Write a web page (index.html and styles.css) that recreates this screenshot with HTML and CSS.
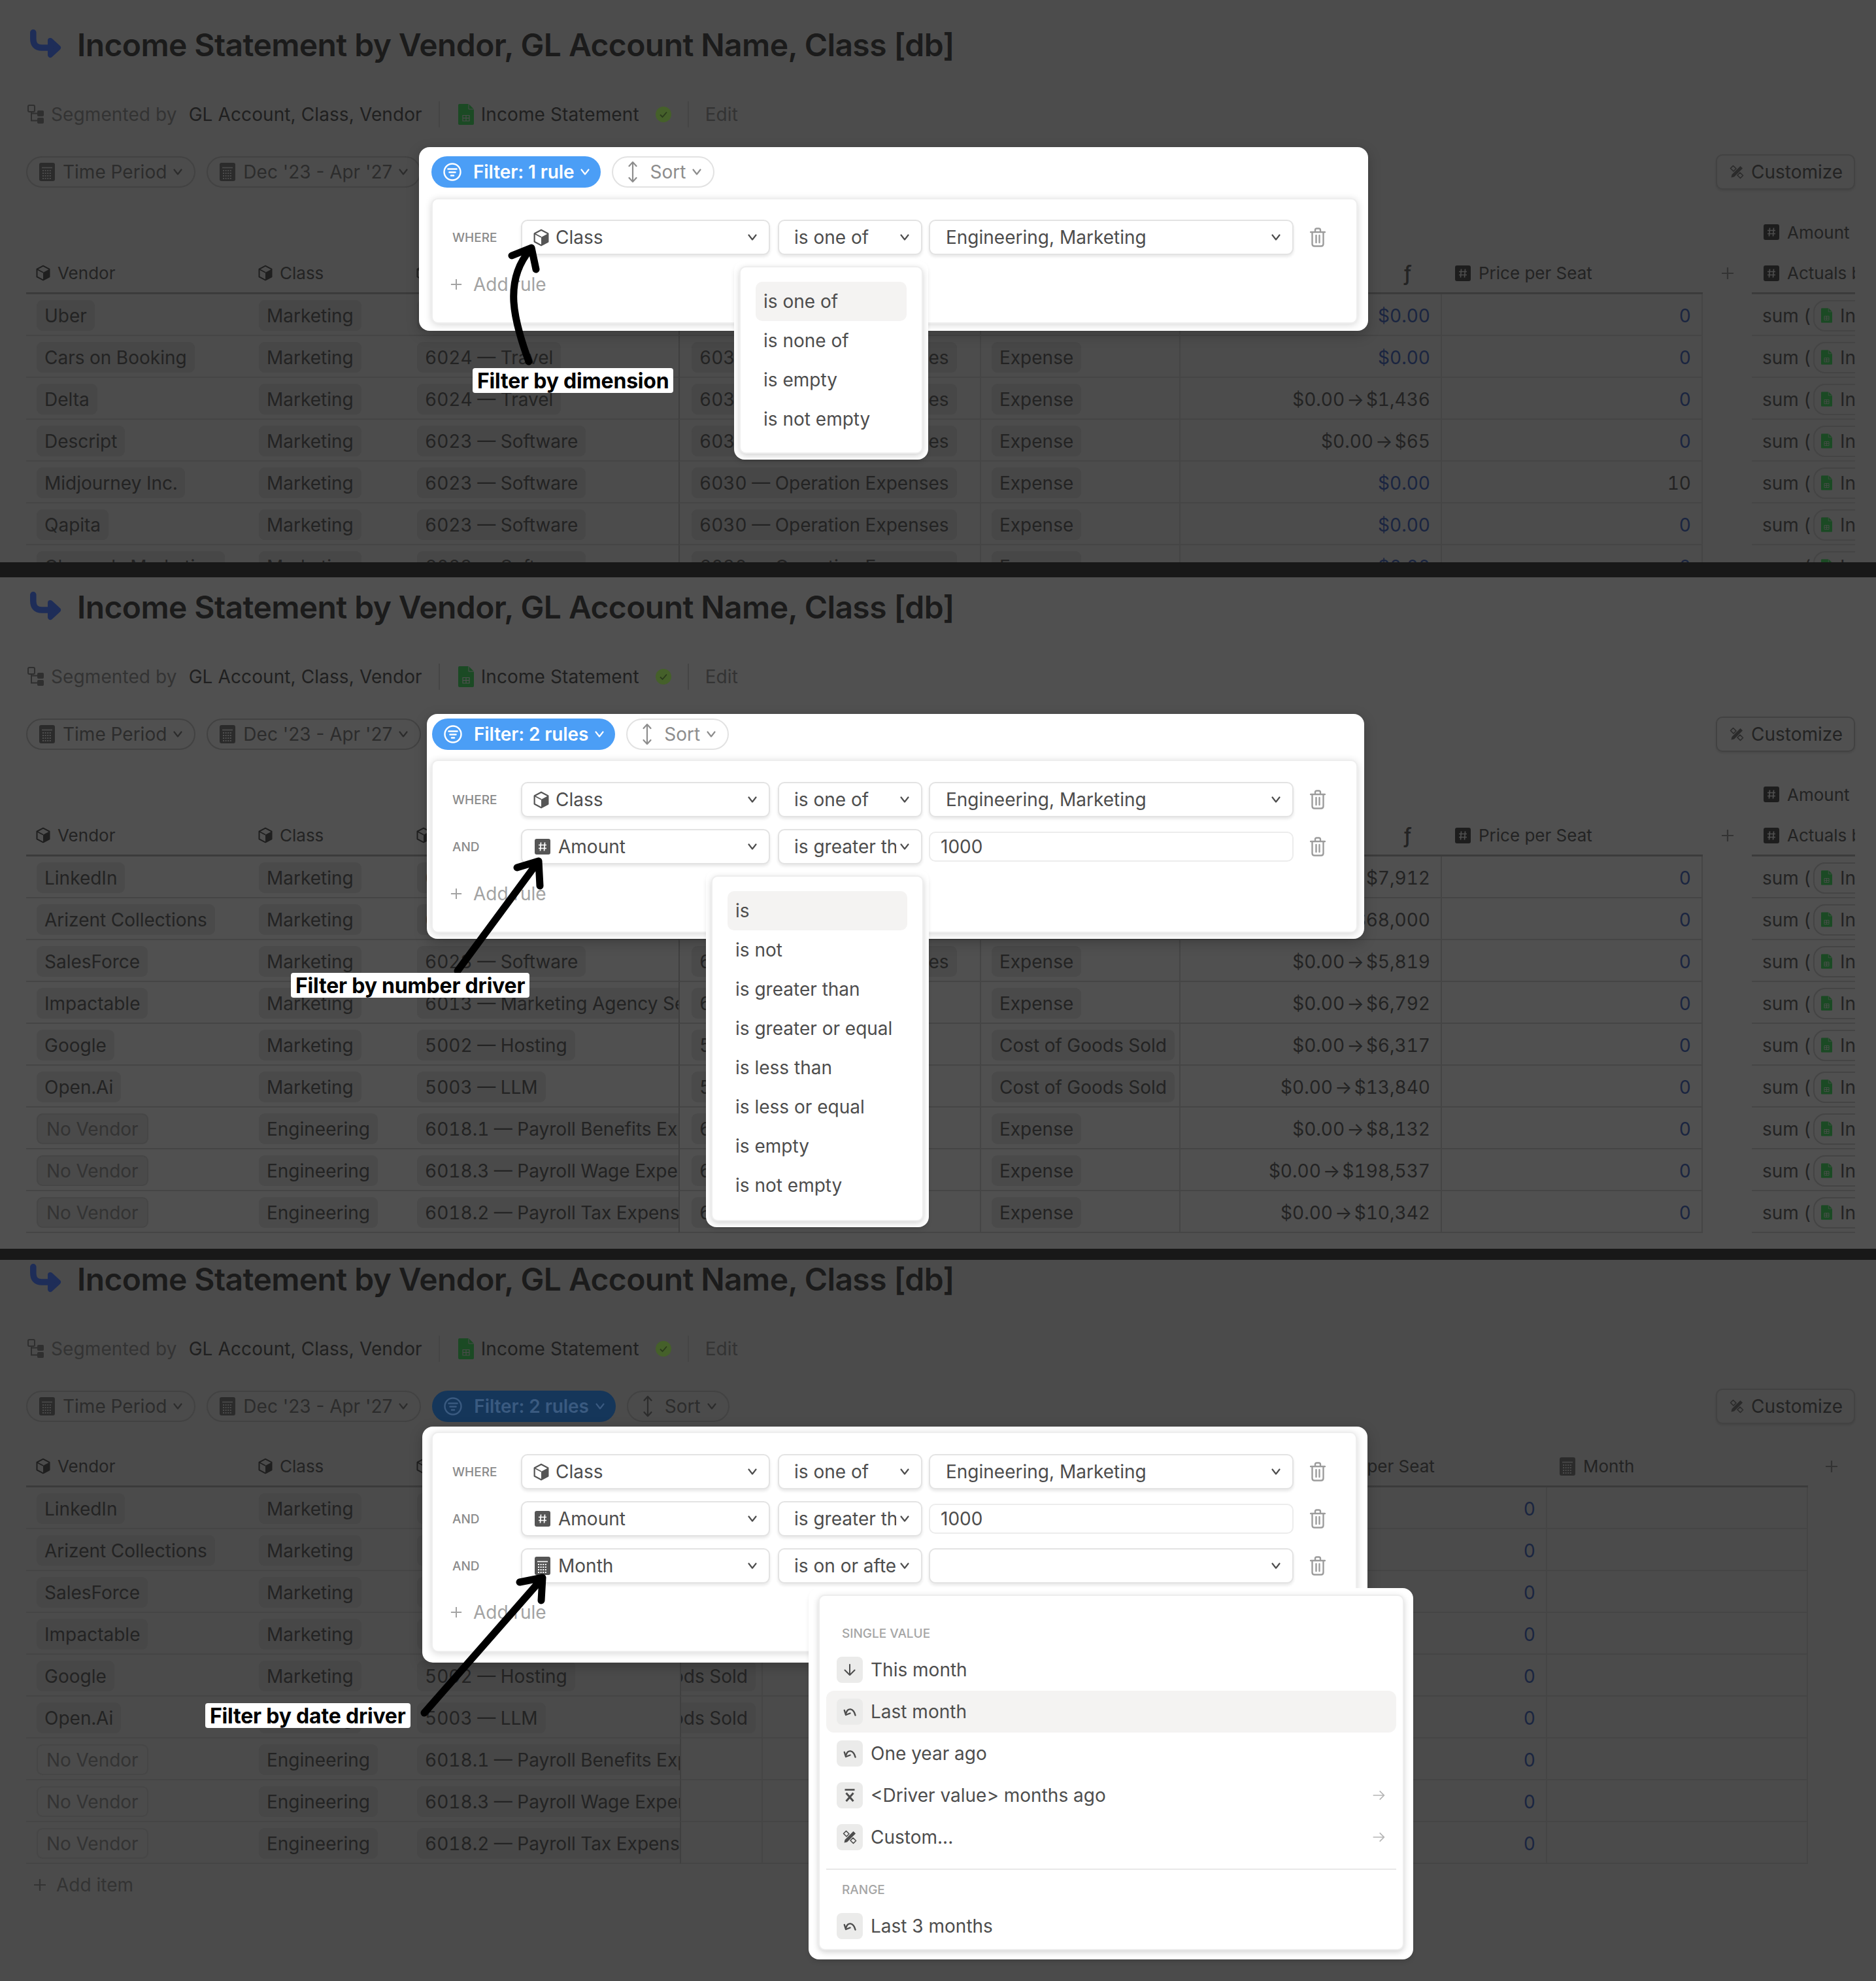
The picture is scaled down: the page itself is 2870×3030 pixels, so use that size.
FILE: index.html
```html
<!DOCTYPE html>
<html lang="en">
<head>
<meta charset="utf-8">
<title>Income Statement filters</title>
<link rel="stylesheet" href="styles.css">
</head>
<body>
<svg class="sprite" width="0" height="0" aria-hidden="true">
<defs>
<mask id="m-hash"><rect width="24" height="24" fill="#fff"/><path d="M9.500 5.500 8.500 18.500M15.500 5.500 14.500 18.500M6 9.500H18M6 14.500H18" stroke="#000" stroke-width="1.700" fill="none"/></mask>
<mask id="m-calc"><rect width="24" height="28" fill="#fff"/><path d="M4 7.500H20" stroke="#000" stroke-width="1.600"/><path d="M5 12H19M5 16H19M5 20H19M5 24H19" stroke="#000" stroke-width="1.800" stroke-dasharray="2 1.600"/></mask>
<mask id="m-sheet"><rect width="24" height="32" fill="#fff"/><path d="M16 0V8H24" fill="none" stroke="#000" stroke-width="1"/><path d="M7 17.500H17V26H7ZM7 21.700H17M12 17.500V26" fill="none" stroke="#000" stroke-width="1.200"/></mask>
<symbol id="i-title" viewBox="0 0 50 48"><path d="M4.800 5.800V15Q4.800 29 18 29H32" fill="none" stroke="currentColor" stroke-width="9.500" stroke-linecap="round"/><path d="M31 18 43 29 31 40Z" fill="currentColor" stroke="currentColor" stroke-width="8" stroke-linejoin="round"/></symbol>
<symbol id="i-cube" viewBox="0 0 22 24"><path d="M11 1.200 20.500 6.200V17.800L11 22.800 1.500 17.800V6.200Z" fill="none" stroke="currentColor" stroke-width="2" stroke-linejoin="round"/><path d="M11 11.300 20.500 6.200V17.800L11 22.800Z" fill="currentColor"/><path d="M1.500 6.200 11 11.300" stroke="currentColor" stroke-width="1.600"/></symbol>
<symbol id="i-hash" viewBox="0 0 24 24"><rect width="24" height="24" rx="3" fill="currentColor" mask="url(#m-hash)"/></symbol>
<symbol id="i-calc" viewBox="0 0 24 28"><rect width="24" height="28" rx="3" fill="currentColor" mask="url(#m-calc)"/></symbol>
<symbol id="i-sheet" viewBox="0 0 24 32"><path d="M2 0H16L24 8V30Q24 32 22 32H2Q0 32 0 30V2Q0 0 2 0Z" fill="currentColor" mask="url(#m-sheet)"/></symbol>
<symbol id="i-check" viewBox="0 0 24 24"><circle cx="12" cy="12" r="12" fill="currentColor"/><path d="M7 12.500 10.500 16 17 8.500" fill="none" stroke="#2a3a1c" stroke-width="1.800"/></symbol>
<symbol id="i-filter" viewBox="0 0 28 28"><circle cx="14" cy="14" r="12.500" fill="none" stroke="currentColor" stroke-width="2.400"/><path d="M7.500 9.500H20.500M9.500 14.500H18.500M12 19.500H16" stroke="currentColor" stroke-width="2.600" stroke-linecap="round"/></symbol>
<symbol id="i-sort" viewBox="0 0 16 34"><path d="M8 2V32M2.500 8 8 2 13.500 8M2.500 26 8 32 13.500 26" fill="none" stroke="currentColor" stroke-width="2.200" stroke-linecap="round" stroke-linejoin="round"/></symbol>
<symbol id="i-chev" viewBox="0 0 14 10"><path d="M1.500 1.500 7 8.500 12.500 1.500" fill="none" stroke="currentColor" stroke-width="2.200" stroke-linecap="round" stroke-linejoin="round"/></symbol>
<symbol id="i-trash" viewBox="0 0 24 30"><path d="M1 7H23M8 7V4Q8 1.500 10.500 1.500H13.500Q16 1.500 16 4V7M3.500 7V25Q3.500 28.500 7 28.500H17Q20.500 28.500 20.500 25V7M9.500 12V23M14.500 12V23" fill="none" stroke="currentColor" stroke-width="2.400" stroke-linecap="round"/></symbol>
<symbol id="i-tree" viewBox="0 0 26 30"><rect x="1" y="1" width="10" height="10" rx="2" fill="none" stroke="currentColor" stroke-width="2"/><rect x="15" y="9" width="10" height="9" rx="2" fill="currentColor"/><rect x="15" y="20" width="10" height="9" rx="2" fill="currentColor"/><path d="M6 11V24.500H15M6 13.500H15" fill="none" stroke="currentColor" stroke-width="2"/></symbol>
<symbol id="i-custom" viewBox="0 0 24 24"><path d="M2.500 6.500 6.500 2.500 11 7 7 11ZM13 17 17 13 21.500 17.500 17.500 21.500Z" fill="none" stroke="currentColor" stroke-width="1.600" stroke-linejoin="round"/><path d="M17.500 3 21 6.500 8 19.500 3.500 20.500 4.500 16Z" fill="currentColor"/></symbol>
<symbol id="i-plus" viewBox="0 0 20 20"><path d="M10 1V19M1 10H19" stroke="currentColor" stroke-width="2.200"/></symbol>
<symbol id="i-undo" viewBox="0 0 20 14"><path d="M4.500 9C7 1 15.500 1 18.500 12.500" fill="none" stroke="currentColor" stroke-width="2.400" stroke-linecap="round"/><path d="M1.800 5 4 12 10.500 9.500" fill="none" stroke="currentColor" stroke-width="2.400" stroke-linecap="round" stroke-linejoin="round"/></symbol>
<symbol id="i-down" viewBox="0 0 18 18"><path d="M9 1V17M1.500 9.500 9 17 16.500 9.500" fill="none" stroke="currentColor" stroke-width="2" stroke-linecap="round" stroke-linejoin="round"/></symbol>
<symbol id="i-xbar" viewBox="0 0 16 20"><path d="M0.500 1.500H15.500" stroke="currentColor" stroke-width="2.600"/><path d="M2.500 6.500 13.500 19M13.500 6.500 2.500 19" stroke="currentColor" stroke-width="3"/></symbol>
<symbol id="i-right" viewBox="0 0 24 20"><path d="M2 10H22M14 2 22 10 14 18" fill="none" stroke="currentColor" stroke-width="2"/></symbol>
</defs>
</svg>

<section class="view view-one">
  <h1 class="title"><svg class="title-icon"><use href="#i-title"/></svg>Income Statement by Vendor, GL Account Name, Class [db]</h1>
  <div class="meta">
    <svg class="meta-tree"><use href="#i-tree"/></svg><span class="meta-muted">Segmented by</span><span class="meta-seg">GL Account, Class, Vendor</span>
    <span class="meta-div"></span><svg class="meta-sheet"><use href="#i-sheet"/></svg><span class="meta-name">Income Statement</span><svg class="meta-check"><use href="#i-check"/></svg>
    <span class="meta-div"></span><span class="meta-edit">Edit</span>
  </div>
  <div class="controls">
    <span class="pill"><svg class="ic-calc"><use href="#i-calc"/></svg>Time Period<svg class="chev"><use href="#i-chev"/></svg></span>
    <span class="pill"><svg class="ic-calc"><use href="#i-calc"/></svg>Dec '23 - Apr '27<svg class="chev"><use href="#i-chev"/></svg></span>
    <span class="customize"><svg class="ic-custom"><use href="#i-custom"/></svg>Customize</span>
  </div>
  <div class="groupbar"><span class="headcell head-side"><svg class="ic-hash"><use href="#i-hash"/></svg>Amount</span></div>
  <div class="table">
    <div class="row thead">
      <div class="cell"><svg class="ic-cube"><use href="#i-cube"/></svg>Vendor</div><div class="cell"><svg class="ic-cube"><use href="#i-cube"/></svg>Class</div><div class="cell"><svg class="ic-cube"><use href="#i-cube"/></svg>GL Account Name</div><div class="cell"></div><div class="cell"></div><div class="cell cell-fn">ƒ</div><div class="cell"><svg class="ic-hash"><use href="#i-hash"/></svg>Price per Seat</div><div class="cell-add"><svg class="ic-plus"><use href="#i-plus"/></svg></div><div class="cell"><svg class="ic-hash"><use href="#i-hash"/></svg>Actuals by Month</div>
    </div>
    <div class="row"><div class="cell"><span class="chip">Uber</span></div><div class="cell"><span class="chip">Marketing</span></div><div class="cell"><span class="chip">6024 — Travel</span></div><div class="cell"><span class="chip">6030 — Operation Expenses</span></div><div class="cell"><span class="chip">Expense</span></div><div class="cell num blue">$0.00</div><div class="cell num blue">0</div><div class="cell-add"></div><div class="cell sum">sum (<span class="ref"><svg class="ic-sheet"><use href="#i-sheet"/></svg>Income</span></div></div>
    <div class="row"><div class="cell"><span class="chip">Cars on Booking</span></div><div class="cell"><span class="chip">Marketing</span></div><div class="cell"><span class="chip">6024 — Travel</span></div><div class="cell"><span class="chip">6030 — Operation Expenses</span></div><div class="cell"><span class="chip">Expense</span></div><div class="cell num blue">$0.00</div><div class="cell num blue">0</div><div class="cell-add"></div><div class="cell sum">sum (<span class="ref"><svg class="ic-sheet"><use href="#i-sheet"/></svg>Income</span></div></div>
    <div class="row"><div class="cell"><span class="chip">Delta</span></div><div class="cell"><span class="chip">Marketing</span></div><div class="cell"><span class="chip">6024 — Travel</span></div><div class="cell"><span class="chip">6030 — Operation Expenses</span></div><div class="cell"><span class="chip">Expense</span></div><div class="cell num">$0.00<span class="to">→</span>$1,436</div><div class="cell num blue">0</div><div class="cell-add"></div><div class="cell sum">sum (<span class="ref"><svg class="ic-sheet"><use href="#i-sheet"/></svg>Income</span></div></div>
    <div class="row"><div class="cell"><span class="chip">Descript</span></div><div class="cell"><span class="chip">Marketing</span></div><div class="cell"><span class="chip">6023 — Software</span></div><div class="cell"><span class="chip">6030 — Operation Expenses</span></div><div class="cell"><span class="chip">Expense</span></div><div class="cell num">$0.00<span class="to">→</span>$65</div><div class="cell num blue">0</div><div class="cell-add"></div><div class="cell sum">sum (<span class="ref"><svg class="ic-sheet"><use href="#i-sheet"/></svg>Income</span></div></div>
    <div class="row"><div class="cell"><span class="chip">Midjourney Inc.</span></div><div class="cell"><span class="chip">Marketing</span></div><div class="cell"><span class="chip">6023 — Software</span></div><div class="cell"><span class="chip">6030 — Operation Expenses</span></div><div class="cell"><span class="chip">Expense</span></div><div class="cell num blue">$0.00</div><div class="cell num">10</div><div class="cell-add"></div><div class="cell sum">sum (<span class="ref"><svg class="ic-sheet"><use href="#i-sheet"/></svg>Income</span></div></div>
    <div class="row"><div class="cell"><span class="chip">Qapita</span></div><div class="cell"><span class="chip">Marketing</span></div><div class="cell"><span class="chip">6023 — Software</span></div><div class="cell"><span class="chip">6030 — Operation Expenses</span></div><div class="cell"><span class="chip">Expense</span></div><div class="cell num blue">$0.00</div><div class="cell num blue">0</div><div class="cell-add"></div><div class="cell sum">sum (<span class="ref"><svg class="ic-sheet"><use href="#i-sheet"/></svg>Income</span></div></div>
    <div class="row"><div class="cell"><span class="chip">Channels Marketing</span></div><div class="cell"><span class="chip">Marketing</span></div><div class="cell"><span class="chip">6023 — Software</span></div><div class="cell"><span class="chip">6030 — Operation Expenses</span></div><div class="cell"><span class="chip">Expense</span></div><div class="cell num blue">$0.00</div><div class="cell num blue">0</div><div class="cell-add"></div><div class="cell sum">sum (<span class="ref"><svg class="ic-sheet"><use href="#i-sheet"/></svg>Income</span></div></div>
  </div>

  <div class="popup popup-one">
    <div class="popup-pills">
      <span class="pill-filter"><svg class="ic-filter"><use href="#i-filter"/></svg>Filter: 1 rule<svg class="chev"><use href="#i-chev"/></svg></span>
      <span class="pill-sort"><svg class="ic-sort"><use href="#i-sort"/></svg>Sort<svg class="chev"><use href="#i-chev"/></svg></span>
    </div>
    <div class="rules">
      <div class="rule"><span class="rule-label">WHERE</span><span class="sel sel-field"><svg class="ic-cube"><use href="#i-cube"/></svg><span class="sel-text">Class</span><svg class="chev"><use href="#i-chev"/></svg></span><span class="sel sel-op"><span class="sel-text">is one of</span><svg class="chev"><use href="#i-chev"/></svg></span><span class="sel sel-val"><span class="sel-text">Engineering, Marketing</span><svg class="chev"><use href="#i-chev"/></svg></span><svg class="ic-trash"><use href="#i-trash"/></svg></div>
      <div class="add-rule"><svg class="ic-plus"><use href="#i-plus"/></svg>Add rule</div>
    </div>
  </div>
  <div class="menu menu-one"><ul class="menu-card"><li class="menu-item is-active">is one of</li><li class="menu-item">is none of</li><li class="menu-item">is empty</li><li class="menu-item">is not empty</li></ul></div>
  <svg class="arrow"><path d="M809 553C786 490 770 430 811 382M783 391 813 379 820 412"/></svg>
  <span class="callout callout-one">Filter by dimension</span>
</section>

<div class="gap gap-one"></div>

<section class="view view-two">
  <h1 class="title"><svg class="title-icon"><use href="#i-title"/></svg>Income Statement by Vendor, GL Account Name, Class [db]</h1>
  <div class="meta">
    <svg class="meta-tree"><use href="#i-tree"/></svg><span class="meta-muted">Segmented by</span><span class="meta-seg">GL Account, Class, Vendor</span>
    <span class="meta-div"></span><svg class="meta-sheet"><use href="#i-sheet"/></svg><span class="meta-name">Income Statement</span><svg class="meta-check"><use href="#i-check"/></svg>
    <span class="meta-div"></span><span class="meta-edit">Edit</span>
  </div>
  <div class="controls">
    <span class="pill"><svg class="ic-calc"><use href="#i-calc"/></svg>Time Period<svg class="chev"><use href="#i-chev"/></svg></span>
    <span class="pill"><svg class="ic-calc"><use href="#i-calc"/></svg>Dec '23 - Apr '27<svg class="chev"><use href="#i-chev"/></svg></span>
    <span class="customize"><svg class="ic-custom"><use href="#i-custom"/></svg>Customize</span>
  </div>
  <div class="groupbar"><span class="headcell head-side"><svg class="ic-hash"><use href="#i-hash"/></svg>Amount</span></div>
  <div class="table">
    <div class="row thead">
      <div class="cell"><svg class="ic-cube"><use href="#i-cube"/></svg>Vendor</div><div class="cell"><svg class="ic-cube"><use href="#i-cube"/></svg>Class</div><div class="cell"><svg class="ic-cube"><use href="#i-cube"/></svg>GL Account Name</div><div class="cell"></div><div class="cell"></div><div class="cell cell-fn">ƒ</div><div class="cell"><svg class="ic-hash"><use href="#i-hash"/></svg>Price per Seat</div><div class="cell-add"><svg class="ic-plus"><use href="#i-plus"/></svg></div><div class="cell"><svg class="ic-hash"><use href="#i-hash"/></svg>Actuals by Month</div>
    </div>
    <div class="row"><div class="cell"><span class="chip">LinkedIn</span></div><div class="cell"><span class="chip">Marketing</span></div><div class="cell"><span class="chip">6013 — Marketing Agency Services</span></div><div class="cell"><span class="chip">6010 — Marketing</span></div><div class="cell"><span class="chip">Expense</span></div><div class="cell num">$0.00<span class="to">→</span>$7,912</div><div class="cell num blue">0</div><div class="cell-add"></div><div class="cell sum">sum (<span class="ref"><svg class="ic-sheet"><use href="#i-sheet"/></svg>Income</span></div></div>
    <div class="row"><div class="cell"><span class="chip">Arizent Collections</span></div><div class="cell"><span class="chip">Marketing</span></div><div class="cell"><span class="chip">6013 — Marketing Agency Services</span></div><div class="cell"><span class="chip">6010 — Marketing</span></div><div class="cell"><span class="chip">Expense</span></div><div class="cell num">$0.00<span class="to">→</span>$68,000</div><div class="cell num blue">0</div><div class="cell-add"></div><div class="cell sum">sum (<span class="ref"><svg class="ic-sheet"><use href="#i-sheet"/></svg>Income</span></div></div>
    <div class="row"><div class="cell"><span class="chip">SalesForce</span></div><div class="cell"><span class="chip">Marketing</span></div><div class="cell"><span class="chip">6023 — Software</span></div><div class="cell"><span class="chip">6030 — Operation Expenses</span></div><div class="cell"><span class="chip">Expense</span></div><div class="cell num">$0.00<span class="to">→</span>$5,819</div><div class="cell num blue">0</div><div class="cell-add"></div><div class="cell sum">sum (<span class="ref"><svg class="ic-sheet"><use href="#i-sheet"/></svg>Income</span></div></div>
    <div class="row"><div class="cell"><span class="chip">Impactable</span></div><div class="cell"><span class="chip">Marketing</span></div><div class="cell"><span class="chip">6013 — Marketing Agency Services</span></div><div class="cell"><span class="chip">6010 — Marketing</span></div><div class="cell"><span class="chip">Expense</span></div><div class="cell num">$0.00<span class="to">→</span>$6,792</div><div class="cell num blue">0</div><div class="cell-add"></div><div class="cell sum">sum (<span class="ref"><svg class="ic-sheet"><use href="#i-sheet"/></svg>Income</span></div></div>
    <div class="row"><div class="cell"><span class="chip">Google</span></div><div class="cell"><span class="chip">Marketing</span></div><div class="cell"><span class="chip">5002 — Hosting</span></div><div class="cell"><span class="chip">5000 — COGS</span></div><div class="cell"><span class="chip">Cost of Goods Sold</span></div><div class="cell num">$0.00<span class="to">→</span>$6,317</div><div class="cell num blue">0</div><div class="cell-add"></div><div class="cell sum">sum (<span class="ref"><svg class="ic-sheet"><use href="#i-sheet"/></svg>Income</span></div></div>
    <div class="row"><div class="cell"><span class="chip">Open.Ai</span></div><div class="cell"><span class="chip">Marketing</span></div><div class="cell"><span class="chip">5003 — LLM</span></div><div class="cell"><span class="chip">5000 — COGS</span></div><div class="cell"><span class="chip">Cost of Goods Sold</span></div><div class="cell num">$0.00<span class="to">→</span>$13,840</div><div class="cell num blue">0</div><div class="cell-add"></div><div class="cell sum">sum (<span class="ref"><svg class="ic-sheet"><use href="#i-sheet"/></svg>Income</span></div></div>
    <div class="row"><div class="cell"><span class="chip chip-empty">No Vendor</span></div><div class="cell"><span class="chip">Engineering</span></div><div class="cell"><span class="chip">6018.1 — Payroll Benefits Expense</span></div><div class="cell"><span class="chip">6018 — Payroll</span></div><div class="cell"><span class="chip">Expense</span></div><div class="cell num">$0.00<span class="to">→</span>$8,132</div><div class="cell num blue">0</div><div class="cell-add"></div><div class="cell sum">sum (<span class="ref"><svg class="ic-sheet"><use href="#i-sheet"/></svg>Income</span></div></div>
    <div class="row"><div class="cell"><span class="chip chip-empty">No Vendor</span></div><div class="cell"><span class="chip">Engineering</span></div><div class="cell"><span class="chip">6018.3 — Payroll Wage Expense</span></div><div class="cell"><span class="chip">6018 — Payroll</span></div><div class="cell"><span class="chip">Expense</span></div><div class="cell num">$0.00<span class="to">→</span>$198,537</div><div class="cell num blue">0</div><div class="cell-add"></div><div class="cell sum">sum (<span class="ref"><svg class="ic-sheet"><use href="#i-sheet"/></svg>Income</span></div></div>
    <div class="row"><div class="cell"><span class="chip chip-empty">No Vendor</span></div><div class="cell"><span class="chip">Engineering</span></div><div class="cell"><span class="chip">6018.2 — Payroll Tax Expense</span></div><div class="cell"><span class="chip">6018 — Payroll</span></div><div class="cell"><span class="chip">Expense</span></div><div class="cell num">$0.00<span class="to">→</span>$10,342</div><div class="cell num blue">0</div><div class="cell-add"></div><div class="cell sum">sum (<span class="ref"><svg class="ic-sheet"><use href="#i-sheet"/></svg>Income</span></div></div>
  </div>

  <div class="popup popup-two">
    <div class="popup-pills">
      <span class="pill-filter"><svg class="ic-filter"><use href="#i-filter"/></svg>Filter: 2 rules<svg class="chev"><use href="#i-chev"/></svg></span>
      <span class="pill-sort"><svg class="ic-sort"><use href="#i-sort"/></svg>Sort<svg class="chev"><use href="#i-chev"/></svg></span>
    </div>
    <div class="rules">
      <div class="rule"><span class="rule-label">WHERE</span><span class="sel sel-field"><svg class="ic-cube"><use href="#i-cube"/></svg><span class="sel-text">Class</span><svg class="chev"><use href="#i-chev"/></svg></span><span class="sel sel-op"><span class="sel-text">is one of</span><svg class="chev"><use href="#i-chev"/></svg></span><span class="sel sel-val"><span class="sel-text">Engineering, Marketing</span><svg class="chev"><use href="#i-chev"/></svg></span><svg class="ic-trash"><use href="#i-trash"/></svg></div>
      <div class="rule"><span class="rule-label">AND</span><span class="sel sel-field"><svg class="ic-hash"><use href="#i-hash"/></svg><span class="sel-text">Amount</span><svg class="chev"><use href="#i-chev"/></svg></span><span class="sel sel-op"><span class="sel-text">is greater than</span><svg class="chev"><use href="#i-chev"/></svg></span><span class="input">1000</span><svg class="ic-trash"><use href="#i-trash"/></svg></div>
      <div class="add-rule"><svg class="ic-plus"><use href="#i-plus"/></svg>Add rule</div>
    </div>
  </div>
  <div class="menu menu-two"><ul class="menu-card"><li class="menu-item is-active">is</li><li class="menu-item">is not</li><li class="menu-item">is greater than</li><li class="menu-item">is greater or equal</li><li class="menu-item">is less than</li><li class="menu-item">is less or equal</li><li class="menu-item">is empty</li><li class="menu-item">is not empty</li></ul></div>
  <svg class="arrow"><path d="M700 602 821 438M791 444 824 434 826 472"/></svg>
  <span class="callout callout-two">Filter by number driver</span>
</section>

<div class="gap gap-two"></div>

<section class="view view-three">
  <h1 class="title"><svg class="title-icon"><use href="#i-title"/></svg>Income Statement by Vendor, GL Account Name, Class [db]</h1>
  <div class="meta">
    <svg class="meta-tree"><use href="#i-tree"/></svg><span class="meta-muted">Segmented by</span><span class="meta-seg">GL Account, Class, Vendor</span>
    <span class="meta-div"></span><svg class="meta-sheet"><use href="#i-sheet"/></svg><span class="meta-name">Income Statement</span><svg class="meta-check"><use href="#i-check"/></svg>
    <span class="meta-div"></span><span class="meta-edit">Edit</span>
  </div>
  <div class="controls">
    <span class="pill"><svg class="ic-calc"><use href="#i-calc"/></svg>Time Period<svg class="chev"><use href="#i-chev"/></svg></span>
    <span class="pill"><svg class="ic-calc"><use href="#i-calc"/></svg>Dec '23 - Apr '27<svg class="chev"><use href="#i-chev"/></svg></span>
    <span class="pill-filter pill-dim"><svg class="ic-filter"><use href="#i-filter"/></svg>Filter: 2 rules<svg class="chev"><use href="#i-chev"/></svg></span>
    <span class="pill pill-sortdim"><svg class="ic-sort"><use href="#i-sort"/></svg>Sort<svg class="chev"><use href="#i-chev"/></svg></span>
    <span class="customize"><svg class="ic-custom"><use href="#i-custom"/></svg>Customize</span>
  </div>
  <div class="table table-scrolled">
    <div class="row thead">
      <div class="cell"><svg class="ic-cube"><use href="#i-cube"/></svg>Vendor</div><div class="cell"><svg class="ic-cube"><use href="#i-cube"/></svg>Class</div><div class="cell"><svg class="ic-cube"><use href="#i-cube"/></svg>GL Account Name</div><div class="cell"></div><div class="cell"></div><div class="cell"><svg class="ic-hash"><use href="#i-hash"/></svg>Price per Seat</div><div class="cell"><svg class="ic-calc"><use href="#i-calc"/></svg>Month</div><div class="cell-add"><svg class="ic-plus"><use href="#i-plus"/></svg></div>
    </div>
    <div class="row"><div class="cell"><span class="chip">LinkedIn</span></div><div class="cell"><span class="chip">Marketing</span></div><div class="cell"><span class="chip">6013 — Marketing Agency Services</span></div><div class="cell"><span class="chip">Expense</span></div><div class="cell"></div><div class="cell num blue">0</div><div class="cell"></div><div class="cell-add"></div></div>
    <div class="row"><div class="cell"><span class="chip">Arizent Collections</span></div><div class="cell"><span class="chip">Marketing</span></div><div class="cell"><span class="chip">6013 — Marketing Agency Services</span></div><div class="cell"><span class="chip">Expense</span></div><div class="cell"></div><div class="cell num blue">0</div><div class="cell"></div><div class="cell-add"></div></div>
    <div class="row"><div class="cell"><span class="chip">SalesForce</span></div><div class="cell"><span class="chip">Marketing</span></div><div class="cell"><span class="chip">6023 — Software</span></div><div class="cell"><span class="chip">Expense</span></div><div class="cell"></div><div class="cell num blue">0</div><div class="cell"></div><div class="cell-add"></div></div>
    <div class="row"><div class="cell"><span class="chip">Impactable</span></div><div class="cell"><span class="chip">Marketing</span></div><div class="cell"><span class="chip">6013 — Marketing Agency Services</span></div><div class="cell"><span class="chip">Expense</span></div><div class="cell"></div><div class="cell num blue">0</div><div class="cell"></div><div class="cell-add"></div></div>
    <div class="row"><div class="cell"><span class="chip">Google</span></div><div class="cell"><span class="chip">Marketing</span></div><div class="cell"><span class="chip">5002 — Hosting</span></div><div class="cell"><span class="chip">Cost of Goods Sold</span></div><div class="cell"></div><div class="cell num blue">0</div><div class="cell"></div><div class="cell-add"></div></div>
    <div class="row"><div class="cell"><span class="chip">Open.Ai</span></div><div class="cell"><span class="chip">Marketing</span></div><div class="cell"><span class="chip">5003 — LLM</span></div><div class="cell"><span class="chip">Cost of Goods Sold</span></div><div class="cell"></div><div class="cell num blue">0</div><div class="cell"></div><div class="cell-add"></div></div>
    <div class="row"><div class="cell"><span class="chip chip-empty">No Vendor</span></div><div class="cell"><span class="chip">Engineering</span></div><div class="cell"><span class="chip">6018.1 — Payroll Benefits Expense</span></div><div class="cell"><span class="chip">Expense</span></div><div class="cell"></div><div class="cell num blue">0</div><div class="cell"></div><div class="cell-add"></div></div>
    <div class="row"><div class="cell"><span class="chip chip-empty">No Vendor</span></div><div class="cell"><span class="chip">Engineering</span></div><div class="cell"><span class="chip">6018.3 — Payroll Wage Expense</span></div><div class="cell"><span class="chip">Expense</span></div><div class="cell"></div><div class="cell num blue">0</div><div class="cell"></div><div class="cell-add"></div></div>
    <div class="row"><div class="cell"><span class="chip chip-empty">No Vendor</span></div><div class="cell"><span class="chip">Engineering</span></div><div class="cell"><span class="chip">6018.2 — Payroll Tax Expense</span></div><div class="cell"><span class="chip">Expense</span></div><div class="cell"></div><div class="cell num blue">0</div><div class="cell"></div><div class="cell-add"></div></div>
  </div>
  <div class="add-item"><svg class="ic-plus"><use href="#i-plus"/></svg>Add item</div>

  <div class="popup popup-three">
    <div class="rules">
      <div class="rule"><span class="rule-label">WHERE</span><span class="sel sel-field"><svg class="ic-cube"><use href="#i-cube"/></svg><span class="sel-text">Class</span><svg class="chev"><use href="#i-chev"/></svg></span><span class="sel sel-op"><span class="sel-text">is one of</span><svg class="chev"><use href="#i-chev"/></svg></span><span class="sel sel-val"><span class="sel-text">Engineering, Marketing</span><svg class="chev"><use href="#i-chev"/></svg></span><svg class="ic-trash"><use href="#i-trash"/></svg></div>
      <div class="rule"><span class="rule-label">AND</span><span class="sel sel-field"><svg class="ic-hash"><use href="#i-hash"/></svg><span class="sel-text">Amount</span><svg class="chev"><use href="#i-chev"/></svg></span><span class="sel sel-op"><span class="sel-text">is greater than</span><svg class="chev"><use href="#i-chev"/></svg></span><span class="input">1000</span><svg class="ic-trash"><use href="#i-trash"/></svg></div>
      <div class="rule"><span class="rule-label">AND</span><span class="sel sel-field"><svg class="ic-calc"><use href="#i-calc"/></svg><span class="sel-text">Month</span><svg class="chev"><use href="#i-chev"/></svg></span><span class="sel sel-op"><span class="sel-text">is on or after</span><svg class="chev"><use href="#i-chev"/></svg></span><span class="sel sel-val"><span class="sel-text"></span><svg class="chev"><use href="#i-chev"/></svg></span><svg class="ic-trash"><use href="#i-trash"/></svg></div>
      <div class="add-rule"><svg class="ic-plus"><use href="#i-plus"/></svg>Add rule</div>
    </div>
  </div>
  <div class="menu menu-three">
    <div class="menu-card">
      <div class="menu-head">SINGLE VALUE</div>
      <div class="date-item"><span class="box"><svg class="ic-down"><use href="#i-down"/></svg></span>This month</div>
      <div class="date-item is-active"><span class="box"><svg class="ic-undo"><use href="#i-undo"/></svg></span>Last month</div>
      <div class="date-item"><span class="box"><svg class="ic-undo"><use href="#i-undo"/></svg></span>One year ago</div>
      <div class="date-item"><span class="box"><svg class="ic-xbar"><use href="#i-xbar"/></svg></span>&lt;Driver value&gt; months ago<svg class="ic-right"><use href="#i-right"/></svg></div>
      <div class="date-item"><span class="box"><svg class="ic-custom"><use href="#i-custom"/></svg></span>Custom...<svg class="ic-right"><use href="#i-right"/></svg></div>
      <div class="menu-rule"></div>
      <div class="menu-head menu-head-range">RANGE</div>
      <div class="date-item"><span class="box"><svg class="ic-undo"><use href="#i-undo"/></svg></span>Last 3 months</div>
    </div>
  </div>
  <svg class="arrow"><path d="M649 693 827 490M795 493 830 486 828 521"/></svg>
  <span class="callout callout-three">Filter by date driver</span>
</section>
</body>
</html>
```
FILE: styles.css
```css
* { box-sizing: border-box; }
html, body { margin: 0; padding: 0; }
body { width: 2870px; background: #181818; font-family: Inter, "Noto Sans", sans-serif; font-size: 28px; color: #232323; }
svg { display: block; flex: none; }
.sprite { position: absolute; }
ul { list-style: none; margin: 0; padding: 0; }

.view { position: relative; overflow: hidden; background: #4c4c4c; width: 2870px; }
.view-one { height: 860px; padding-top: 40px; }
.view-two { height: 1027px; padding-top: 17px; background: #505050; }
.view-three { height: 1103px; padding-top: 1px; background: #4b4b4b; }
.gap-one { height: 23px; }
.gap-two { height: 17px; }

.title { margin: 0 0 0 46px; height: 56px; display: flex; align-items: center; gap: 22px; font-size: 48px; font-weight: 600; color: #1b1b1b; white-space: nowrap; letter-spacing: -0.6px; }
.title-icon { width: 50px; height: 48px; color: #1e2d58; }

.meta { margin: 59px 0 0 42px; height: 40px; display: flex; align-items: center; white-space: nowrap; letter-spacing: 0.1px; }
.meta-tree { width: 26px; height: 30px; color: #2f2f2f; margin-right: 10px; }
.meta-muted { color: #333; margin-right: 18px; }
.meta-seg { color: #202020; }
.meta-div { width: 2px; height: 40px; background: #454545; margin: 0 25px; }
.meta-sheet { width: 24px; height: 32px; color: #1b4a24; margin: 0 11px 0 3px; }
.meta-name { color: #202020; }
.meta-check { width: 24px; height: 24px; color: #45602a; margin-left: 25px; }
.meta-edit { color: #333; }

.controls { margin: 44px 32px 0 40px; height: 48px; display: flex; align-items: center; gap: 17px; }
.pill { height: 48px; border: 2px solid #424242; border-radius: 24px; display: flex; align-items: center; padding: 0 18px 0 18px; color: #2c2c2c; white-space: nowrap; }
.ic-calc { width: 24px; height: 28px; color: #2b2b2b; margin-right: 12px; }
.chev { width: 14px; height: 10px; margin-left: 10px; }
.customize { margin-left: auto; height: 54px; width: 213px; border: 2px solid #424242; border-radius: 10px; display: flex; align-items: center; padding-left: 18px; color: #232323; box-shadow: 0 2px 3px rgba(0, 0, 0, .1); }
.ic-custom { width: 24px; height: 24px; margin-right: 10px; color: #2b2b2b; }

.groupbar { margin: 37px 32px 0 0; height: 62px; display: flex; justify-content: flex-end; }
.headcell { width: 158px; display: flex; align-items: center; font-size: 26px; overflow: hidden; white-space: nowrap; }
.head-side { padding-left: 18px; color: #232323; }
.ic-hash { width: 24px; height: 24px; color: #1d1d1d; margin-right: 12px; }
.ic-cube { width: 22px; height: 25px; color: #1f1f1f; margin-right: 11px; }

.table { margin-left: 40px; }
.row { display: grid; grid-template-columns: 340px 242px 416px 461px 305px 400px 401px 75px 158px; height: 64px; }
.table-scrolled { margin-top: 36px; }
.table-scrolled .row { grid-template-columns: 340px 242px 418px 125px 799px 401px 401px 72px; }
.cell { display: flex; align-items: center; padding: 3px 0 0 16px; border-bottom: 2px solid #454545; overflow: hidden; white-space: nowrap; min-width: 0; }
.cell-add { display: flex; align-items: center; justify-content: center; color: #333; }
.ic-plus { width: 20px; height: 20px; }
.thead .cell { font-size: 26px; border-bottom: 3px solid #3b3b3b; padding-left: 15px; padding-top: 2px; color: #232323; }
.thead .cell:nth-child(7) { padding-left: 22px; }
.thead .cell:nth-child(9) { padding-left: 18px; }
.thead .cell-fn { justify-content: flex-end; padding-right: 44px; font-size: 32px; font-weight: 500; }
.row .cell:nth-child(4) { border-left: 2px solid #3f3f3f; padding-left: 18px; }
.row .cell:nth-child(5), .row .cell:nth-child(6), .row .cell:nth-child(7) { border-left: 2px solid #454545; }
.row .cell:nth-child(7) { border-right: 2px solid #454545; }
.thead .cell:nth-child(n+4) { border-left: 0; border-right: 0; }
.table-scrolled .thead .cell:nth-child(6), .table-scrolled .thead .cell:nth-child(7) { padding-left: 21px; }
.table-scrolled .row .cell:nth-child(5) { padding-left: 0; }
.table-scrolled .row:not(.thead) .cell:nth-child(4) { padding-left: 0; }
.table-scrolled .row:not(.thead) .cell:nth-child(4) .chip { margin-left: -166px; }

.chip { flex: none; height: 47px; padding: 0 12px; display: flex; align-items: center; background: #474747; border-radius: 9px; color: #232323; font-variant-numeric: tabular-nums; }
.chip-empty { background: transparent; border: 2px solid #464646; color: #333; padding: 0 13px; }
.view-two .chip { background: #4a4a4a; }
.num { justify-content: flex-end; padding-right: 16px; color: #232323; font-variant-numeric: tabular-nums; }
.to { margin: 0 3px; }
.blue { color: #1a2540; }
.sum { padding-left: 16px; }
.ref { flex: none; height: 48px; border: 2px solid #444; border-radius: 18px; margin-left: 4px; padding: 0 0 0 10px; display: flex; align-items: center; }
.ic-sheet { width: 17px; height: 23px; color: #1b4a24; margin-right: 12px; }

.add-item { margin: 17px 0 0 51px; height: 30px; display: flex; align-items: center; gap: 15px; color: #333; }

.popup { position: absolute; background: #fff; border-radius: 16px; box-shadow: 0 6px 20px rgba(0, 0, 0, .22); }
.popup-one { left: 641px; top: 225px; width: 1452px; height: 281px; padding: 14px 16px 11px 19px; }
.popup-two { left: 653px; top: 209px; width: 1434px; height: 344px; padding: 7px 10px 9px 7px; }
.popup-three { left: 646px; top: 255px; width: 1446px; height: 361px; padding: 8px 16px 16px 14px; }
.popup-pills { display: flex; gap: 17px; height: 48px; }
.popup-one .popup-pills, .popup-two .popup-pills { margin-bottom: 16px; }
.popup-two .popup-pills { margin-left: 1px; margin-bottom: 15px; }
.pill-filter { height: 48px; border-radius: 24px; background: #4b9ef6; color: #fff; display: flex; align-items: center; padding: 0 17px 0 18px; font-weight: 600; white-space: nowrap; letter-spacing: -0.1px; }
.ic-filter { width: 28px; height: 28px; margin-right: 18px; }
.pill-sort { height: 48px; border-radius: 24px; border: 2px solid #e2e2e2; color: #8d8d8d; display: flex; align-items: center; padding: 0 18px 0 22px; }
.ic-sort { width: 16px; height: 34px; margin-right: 18px; }
.pill-dim { background: #15365a; color: #3a5a80; }
.pill-sortdim { padding: 0 18px 0 22px; color: #2c2c2c; }
.pill-sortdim .ic-sort { color: #2c2c2c; }

.rules { background: #fff; border: 2px solid #eeeeee; border-radius: 10px; box-shadow: 0 2px 12px rgba(0, 0, 0, .16); padding: 31px 0 0 30px; height: 192px; }
.popup-two .rules { height: 265px; padding-top: 32px; }
.popup-three .rules { height: 337px; padding-top: 32px; }
.popup-three .add-rule { margin-top: 29px; }
.rule { display: flex; align-items: center; height: 54px; margin-bottom: 18px; }
.rule-label { width: 105px; font-size: 19px; font-weight: 500; color: #8b8b8b; }
.sel { height: 54px; background: #fff; border: 2px solid #e3e3e3; border-radius: 10px; box-shadow: 0 3px 4px rgba(0, 0, 0, .09); display: flex; align-items: center; color: #4d4d4d; padding: 0 18px 0 24px; overflow: hidden; }
.sel .chev { margin-left: 0; color: #4d4d4d; }
.sel .ic-cube, .sel .ic-hash, .sel .ic-calc { color: #555; }
.sel .ic-cube { width: 24px; height: 27px; margin-right: 10px; }
.sel .ic-hash, .sel .ic-calc { margin-left: 2px; margin-right: 12px; }
.sel-text { flex: 1; white-space: nowrap; overflow: hidden; min-width: 0; }
.sel-field { width: 381px; padding-left: 17px; margin-right: 12px; }
.sel-op { width: 221px; margin-right: 10px; padding-left: 23px; }
.sel-op .sel-text { flex: none; width: 156px; }
.sel-op .chev { margin-left: auto; }
.sel-val { width: 558px; }
.input { width: 558px; height: 46px; border: 2px solid #ececec; border-radius: 10px; display: flex; align-items: center; padding-left: 16px; color: #4d4d4d; }
.ic-trash { width: 24px; height: 30px; color: #9c9c9c; margin-left: 25px; }
.add-rule { margin: 30px 0 0 -3px; height: 30px; display: flex; align-items: center; gap: 17px; color: #a3a3a3; }
.add-rule .ic-plus { width: 18px; height: 18px; margin-left: 0; }

.menu { position: absolute; background: #fff; border-radius: 16px; padding: 9px 8px; box-shadow: 0 5px 8px -3px rgba(0, 0, 0, .18); }
.menu-one { left: 1123px; top: 398px; width: 297px; height: 305px; }
.menu-two { left: 1080px; top: 447px; width: 341px; height: 547px; }
.menu-three { left: 1237px; top: 502px; width: 925px; height: 568px; padding: 10px 14px 14px 15px; }
.menu-card { height: 100%; background: #fff; border: 2px solid #eee; border-radius: 10px; box-shadow: 0 3px 10px rgba(0, 0, 0, .18); padding: 22px 23px; }
.menu-item { height: 60px; padding-left: 12px; border-radius: 10px; display: flex; align-items: center; color: #4d4d4d; }
.is-active { background: #f4f3f2; }
.menu-three .menu-card { padding: 46px 10px 0 10px; }
.menu-head { font-size: 19px; font-weight: 500; color: #a5a5a5; height: 24px; line-height: 24px; padding-left: 24px; margin-bottom: 11px; }
.menu-head-range { margin: 19px 0 11px; }
.date-item { height: 64px; border-radius: 12px; display: flex; align-items: center; padding: 0 17px 0 16px; color: #4d4d4d; }
.box { width: 40px; height: 40px; border-radius: 8px; background: #ebebea; display: flex; align-items: center; justify-content: center; margin-right: 12px; }
.box svg { color: #4d4d4d; margin: 0; }
.ic-down { width: 18px; height: 18px; }
.ic-undo { width: 20px; height: 14px; }
.ic-xbar { width: 16px; height: 20px; }
.box .ic-custom { width: 24px; height: 24px; }
.ic-right { width: 20px; height: 18px; margin-left: auto; color: #b5b5b5; }
.menu-rule { height: 2px; background: #e8e8e8; margin-top: 16px; }

.arrow { position: absolute; left: 0; top: 0; width: 2870px; height: 1100px; fill: none; stroke: #000; stroke-width: 11; stroke-linecap: round; stroke-linejoin: round; pointer-events: none; }
.callout { position: absolute; height: 38px; padding: 0 7px; background: #fff; border-radius: 4px; display: flex; align-items: center; color: #000; font-size: 32px; font-weight: 700; letter-spacing: -0.2px; white-space: nowrap; }
.callout-one { left: 723px; top: 563px; }
.callout-two { left: 445px; top: 605px; }
.callout-three { left: 314px; top: 678px; }
```
